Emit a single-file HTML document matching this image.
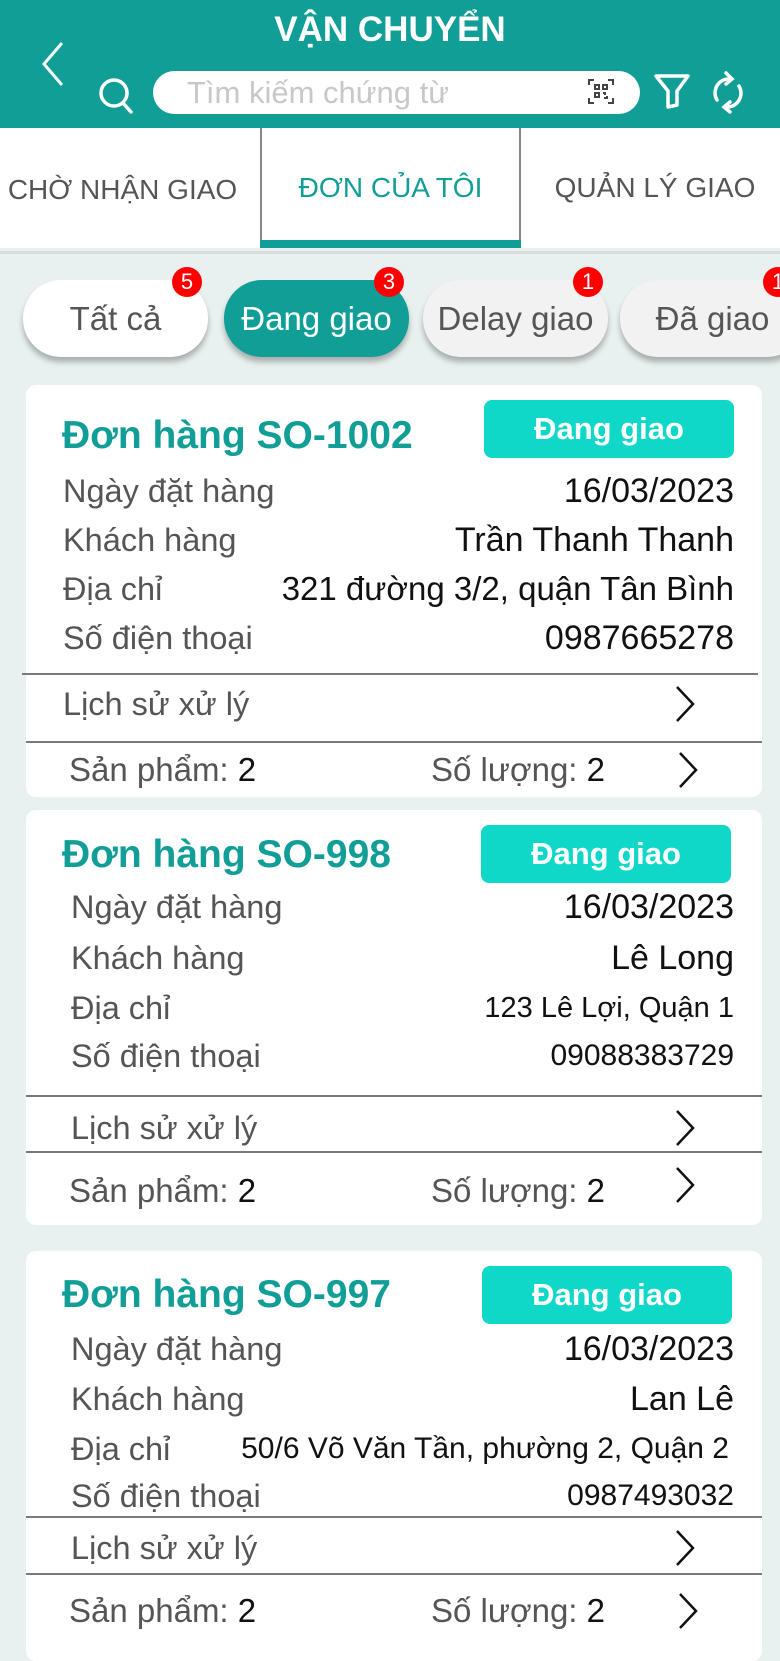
<!DOCTYPE html>
<html><head><meta charset="utf-8"><style>
*{margin:0;padding:0;box-sizing:border-box}
body{width:780px;height:1648px;overflow:hidden;background:#e8f1ef;font-family:"Liberation Sans","Noto Sans CJK SC",sans-serif;position:relative}
.a{position:absolute;white-space:nowrap}
.hdr{position:absolute;left:0;top:0;width:780px;height:128px;background:#119e96}
.tabs{position:absolute;left:0;top:128px;width:780px;height:120px;background:#fff}
.tab{position:absolute;top:0;height:120px;line-height:120px;font-size:28px;color:#555;text-align:center;white-space:nowrap}
.pill{position:absolute;top:280px;height:77px;border-radius:38px;background:#f2f2f2;box-shadow:0 5px 6px rgba(0,0,0,.28);font-size:33px;color:#555;text-align:center;line-height:77px;white-space:nowrap}
.bd{position:absolute;top:267px;width:30px;height:30px;border-radius:50%;background:#f00;color:#fff;font-size:22px;text-align:center;line-height:30px}
.card{position:absolute;left:26px;width:736px;background:#fff;border-radius:10px}
.t{position:absolute;font-size:39px;font-weight:bold;color:#119e96;line-height:44px;white-space:nowrap}
.b{position:absolute;width:250px;height:58px;border-radius:8px;background:#10d8c8;color:#fff;font-size:31px;font-weight:bold;text-align:center;line-height:58px}
.l{position:absolute;font-size:32.5px;color:#555;line-height:36px;white-space:nowrap}
.v{position:absolute;right:28px;font-size:34px;color:#111;line-height:36px;text-align:right;white-space:nowrap}
.hr{position:absolute;left:0;width:736px;height:2px;background:#7a7a7a}
.chev{position:absolute;width:26px;height:38px}
.s{font-size:33px!important}
</style></head><body>
<div class="hdr"></div>
<div class="a" style="left:0;width:780px;text-align:center;top:9px;font-size:35px;font-weight:bold;color:#fff;line-height:42px">VẬN CHUYỂN</div>
<svg class="a" style="left:38px;top:40px" width="30" height="50" viewBox="0 0 30 50"><path d="M24 3 L6 24 L24 45" fill="none" stroke="#fff" stroke-width="3"/></svg>
<svg class="a" style="left:98px;top:76px" width="40" height="40" viewBox="0 0 40 40"><circle cx="16" cy="17" r="13" fill="none" stroke="#fff" stroke-width="3.5"/><path d="M25 27 L33 36" stroke="#fff" stroke-width="3.5" stroke-linecap="round"/></svg>
<div class="a" style="left:153px;top:71px;width:487px;height:43px;border-radius:22px;background:#fff"></div>
<div class="a" style="left:187px;top:71px;line-height:43px;font-size:31px;color:#c8c8c8">Tìm kiếm chứng từ</div>
<svg class="a" style="left:588px;top:79px" width="26" height="25" viewBox="0 0 26 25" fill="none" stroke="#444" stroke-width="2"><path d="M1 6V1h5M20 1h5v5M25 19v5h-5M6 24H1v-5"/><rect x="7" y="6" width="4" height="4"/><rect x="15" y="6" width="4" height="4"/><rect x="7" y="14" width="4" height="4"/><path d="M15 14h2v2M19 17v2h-3"/></svg>
<svg class="a" style="left:652px;top:72px" width="40" height="40" viewBox="0 0 40 40"><path d="M4 4 H36 L25 19 V33 L16 35 V19 Z" fill="none" stroke="#fff" stroke-width="3.5" stroke-linejoin="round"/></svg>
<svg class="a" style="left:709px;top:70px" width="38" height="46" viewBox="0 0 38 46" fill="none" stroke="#fff" stroke-width="3.5" stroke-linecap="round"><path d="M8 30 A14 14 0 0 1 22 9"/><path d="M17 3 L23 9 L17 14"/><path d="M30 16 A14 14 0 0 1 16 37"/><path d="M21 32 L15 37 L21 42"/></svg>
<div class="tabs"></div>
<div class="tab" style="left:0;width:245px;top:130px">CHỜ NHẬN GIAO</div>
<div class="a" style="left:260px;top:128px;width:261px;height:120px;border-left:2px solid #888;border-right:2px solid #888"></div>
<div class="tab" style="left:260px;width:261px;top:128px;color:#119e96">ĐƠN CỦA TÔI</div>
<div class="a" style="left:260px;top:240px;width:261px;height:8px;background:#119e96"></div>
<div class="tab" style="left:540px;width:230px;top:128px">QUẢN LÝ GIAO</div>
<div class="a" style="left:0;top:251px;width:780px;height:3px;background:#d8dcdc"></div>

<div class="pill" style="left:23px;width:185px;background:#fff">Tất cả</div>
<div class="pill" style="left:224px;width:185px;background:#119e96;color:#fff">Đang giao</div>
<div class="pill" style="left:423px;width:185px">Delay giao</div>
<div class="pill" style="left:620px;width:185px">Đã giao</div>
<div class="bd" style="left:172px">5</div>
<div class="bd" style="left:374px">3</div>
<div class="bd" style="left:573px">1</div>
<div class="bd" style="left:763px">1</div>

<!-- card 1 -->
<div class="card" style="top:385px;height:412px">
<div class="t" style="left:36px;top:29px">Đơn hàng SO-1002</div>
<div class="b" style="left:458px;top:15px">Đang giao</div>
<div class="l" style="left:37px;top:88px">Ngày đặt hàng</div><div class="v" style="top:88px">16/03/2023</div>
<div class="l" style="left:37px;top:137px">Khách hàng</div><div class="v" style="top:137px">Trần Thanh Thanh</div>
<div class="l" style="left:37px;top:186px">Địa chỉ</div><div class="v" style="top:186px;font-size:33px">321 đường 3/2, quận Tân Bình</div>
<div class="l" style="left:37px;top:235px">Số điện thoại</div><div class="v" style="top:235px">0987665278</div>
<div class="hr" style="top:288px;left:-4px"></div>
<div class="l" style="left:37px;top:301px">Lịch sử xử lý</div>
<svg class="chev" style="left:647px;top:300px" viewBox="0 0 26 38"><path d="M4 2 L20 19 L4 36" fill="none" stroke="#111" stroke-width="2.5"/></svg>
<div class="hr" style="top:356px"></div>
<div class="l s" style="left:43px;top:367px">Sản phẩm: <span style="color:#111">2</span></div>
<div class="l s" style="left:405px;top:367px">Số lượng: <span style="color:#111">2</span></div>
<div style="position:absolute;left:650px;top:366px;width:26px;height:38px"><svg width="26" height="38" viewBox="0 0 26 38"><path d="M4 2 L20 19 L4 36" fill="none" stroke="#111" stroke-width="2.5"/></svg></div>
</div>

<!-- card 2 -->
<div class="card" style="top:810px;height:415px">
<div class="t" style="left:36px;top:23px">Đơn hàng SO-998</div>
<div class="b" style="left:455px;top:15px">Đang giao</div>
<div class="l" style="left:45px;top:79px">Ngày đặt hàng</div><div class="v" style="top:79px">16/03/2023</div>
<div class="l" style="left:45px;top:130px">Khách hàng</div><div class="v" style="top:130px">Lê Long</div>
<div class="l" style="left:45px;top:180px">Địa chỉ</div><div class="v" style="top:180px;font-size:29px">123 Lê Lợi, Quận 1</div>
<div class="l" style="left:45px;top:228px">Số điện thoại</div><div class="v" style="top:228px;font-size:30px">09088383729</div>
<div class="hr" style="top:285px"></div>
<div class="l" style="left:45px;top:300px">Lịch sử xử lý</div>
<div style="position:absolute;left:647px;top:299px"><svg width="26" height="38" viewBox="0 0 26 38"><path d="M4 2 L20 19 L4 36" fill="none" stroke="#111" stroke-width="2.5"/></svg></div>
<div class="hr" style="top:341px"></div>
<div class="l s" style="left:43px;top:363px">Sản phẩm: <span style="color:#111">2</span></div>
<div class="l s" style="left:405px;top:363px">Số lượng: <span style="color:#111">2</span></div>
<div style="position:absolute;left:647px;top:356px"><svg width="26" height="38" viewBox="0 0 26 38"><path d="M4 2 L20 19 L4 36" fill="none" stroke="#111" stroke-width="2.5"/></svg></div>
</div>

<!-- card 3 -->
<div class="card" style="top:1251px;height:410px">
<div class="t" style="left:36px;top:22px">Đơn hàng SO-997</div>
<div class="b" style="left:456px;top:15px">Đang giao</div>
<div class="l" style="left:45px;top:80px">Ngày đặt hàng</div><div class="v" style="top:80px">16/03/2023</div>
<div class="l" style="left:45px;top:130px">Khách hàng</div><div class="v" style="top:130px">Lan Lê</div>
<div class="l" style="left:45px;top:180px">Địa chỉ</div><div class="v" style="top:180px;font-size:30px;right:33px">50/6 Võ Văn Tần, phường 2, Quận 2</div>
<div class="l" style="left:45px;top:227px">Số điện thoại</div><div class="v" style="top:227px;font-size:30px">0987493032</div>
<div class="hr" style="top:265px"></div>
<div class="l" style="left:45px;top:279px">Lịch sử xử lý</div>
<div style="position:absolute;left:647px;top:278px"><svg width="26" height="38" viewBox="0 0 26 38"><path d="M4 2 L20 19 L4 36" fill="none" stroke="#111" stroke-width="2.5"/></svg></div>
<div class="hr" style="top:322px"></div>
<div class="l s" style="left:43px;top:342px">Sản phẩm: <span style="color:#111">2</span></div>
<div class="l s" style="left:405px;top:342px">Số lượng: <span style="color:#111">2</span></div>
<div style="position:absolute;left:650px;top:341px"><svg width="26" height="38" viewBox="0 0 26 38"><path d="M4 2 L20 19 L4 36" fill="none" stroke="#111" stroke-width="2.5"/></svg></div>
</div>
</body></html>
